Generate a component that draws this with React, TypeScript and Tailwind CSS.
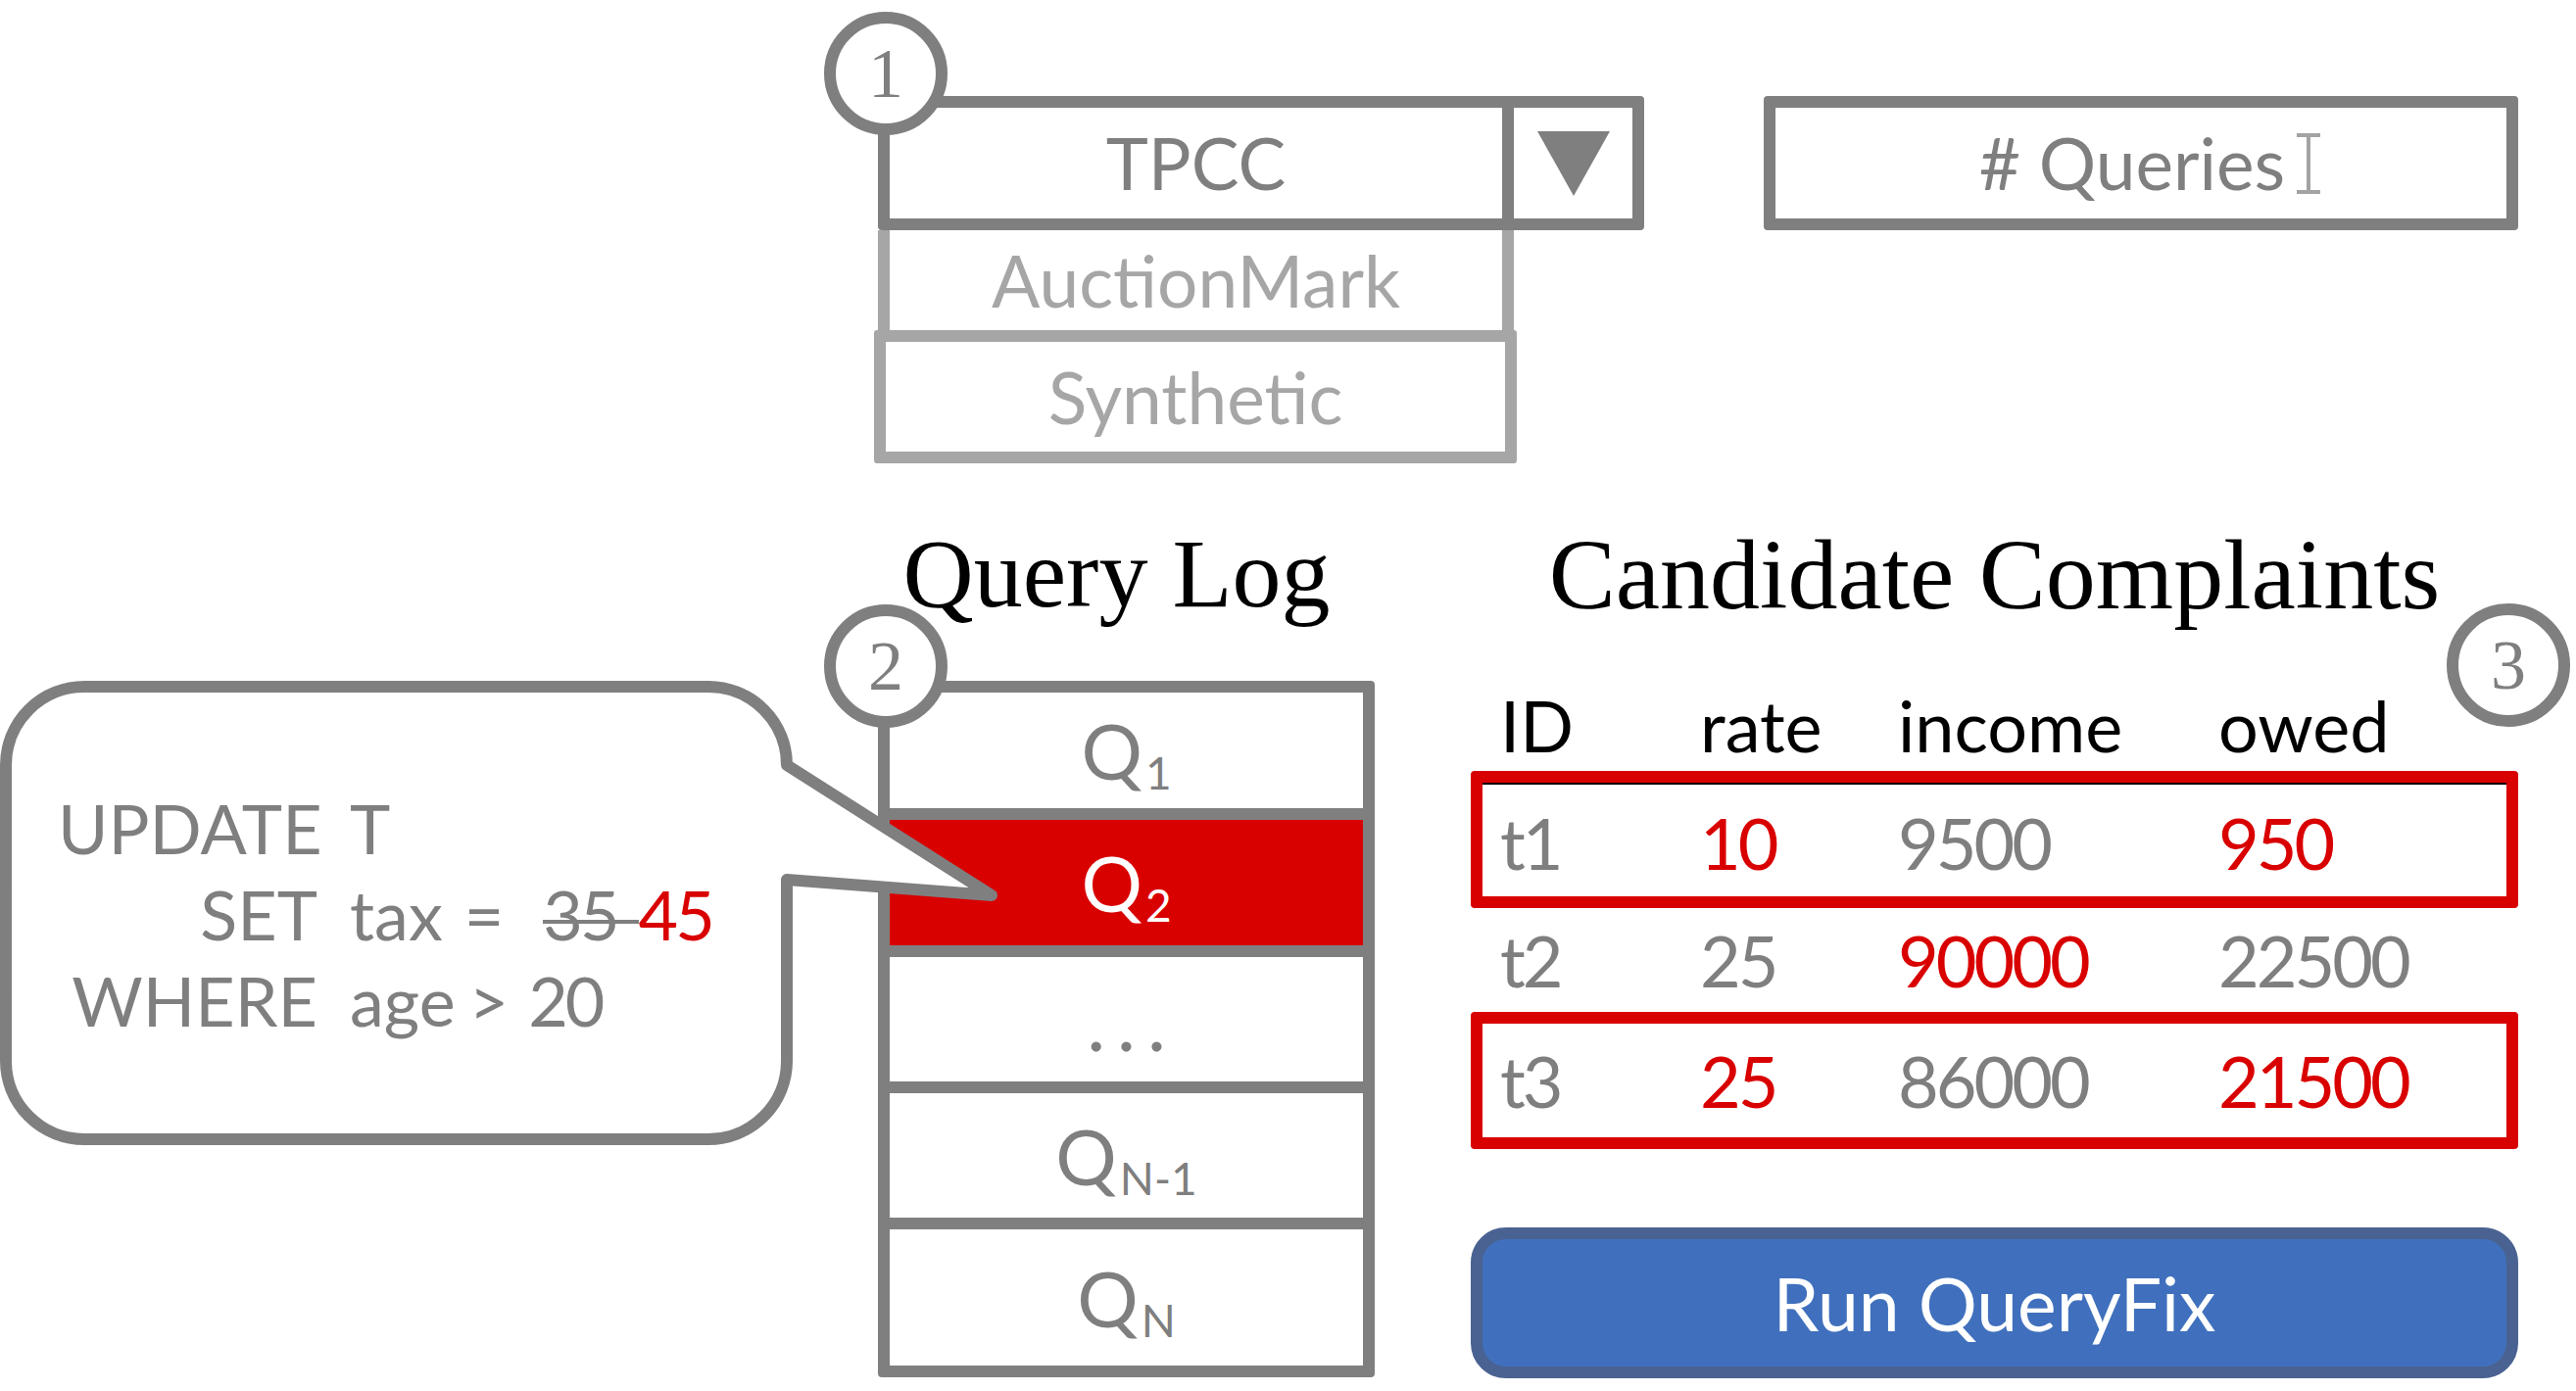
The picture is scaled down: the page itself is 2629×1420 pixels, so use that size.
import React from "react";

const GRAY = "#7f7f7f";

function Circle({ n, className }: { n: string; className: string }) {
  return (
    <div
      className={
        "absolute w-[126px] h-[126px] rounded-full border-[12px] border-[#7f7f7f] bg-white flex items-center justify-center font-['Liberation_Serif',serif] text-[72px] leading-none text-[#7f7f7f] z-20 " +
        className
      }
    >
      {n}
    </div>
  );
}

function QLabel({ sub, white }: { sub: string; white?: boolean }) {
  return (
    <div className={"flex items-baseline " + (white ? "text-white" : "text-[#7f7f7f]")}>
      <span className="text-[78px] leading-none">Q</span>
      <span className="text-[46px] leading-none relative top-[10px] ml-[3px]">{sub}</span>
    </div>
  );
}

const RED = "text-[#d90000] tracking-[-3px]";
const GR = "text-[#7f7f7f] tracking-[-3px]";

function Row({ cells }: { cells: [string, string][] }) {
  return (
    <div className="grid grid-cols-[204px_202px_327px_1fr] text-[72px] leading-none">
      {cells.map(([t, c], i) => (
        <span key={i} className={c}>
          {t}
        </span>
      ))}
    </div>
  );
}

export default function App() {
  return (
    <div className="relative w-[2629px] h-[1420px] bg-white overflow-hidden font-['Lato',sans-serif]">
      {/* Top row */}
      <div className="flex pt-[98px]">
        <div className="ml-[892px] w-[786px] flex flex-col relative">
          <div className="relative ml-[4px] flex h-[137px] w-[782px] border-[12px] border-[#7f7f7f] rounded-[4px] bg-white">
            <Circle n="1" className="left-[-67px] top-[-98px]" />
            <div className="w-[637px] border-r-[12px] border-[#7f7f7f] flex items-center justify-center text-[73px] leading-none text-[#7f7f7f]">
              TPCC
            </div>
            <div className="flex-1 flex items-center justify-center">
              <svg width="74" height="66" viewBox="0 0 74 66">
                <polygon points="0,0 74,0 37,66" fill={GRAY} />
              </svg>
            </div>
          </div>
          <div className="ml-[4px] w-[649px] h-[102px] border-x-[12px] border-[#a6a6a6] flex items-center justify-center text-[73px] leading-none text-[#a6a6a6]">
            AuctionMark
          </div>
          <div className="w-[656px] h-[136px] border-[12px] border-[#a6a6a6] rounded-[3px] flex items-center justify-center text-[73px] leading-none text-[#a6a6a6]">
            Synthetic
          </div>
        </div>
        <div className="ml-[122px] w-[770px] h-[137px] border-[12px] border-[#7f7f7f] rounded-[4px] flex items-center justify-center gap-[10px] pl-[20px]">
          <span className="text-[73px] leading-none text-[#7f7f7f]"># Queries</span>
          <svg width="28" height="64" viewBox="0 0 28 64">
            <path d="M2 3 H26 M14 3 V61 M2 61 H26" stroke="#a3a3a3" strokeWidth="4" fill="none" />
          </svg>
        </div>
      </div>

      {/* Bottom section */}
      <div className="flex mt-[63px]">
        {/* Bubble column */}
        <div className="w-[896px] pt-[159px] relative z-10">
          <div className="relative w-[809px] h-[474px]">
            <svg
              className="absolute left-0 top-0 overflow-visible"
              width="1030"
              height="480"
              viewBox="0 0 1030 480"
            >
              <path
                d="M 86 6 H 723 A 80 80 0 0 1 803 86 L 1012 219 L 803 203 V 388 A 80 80 0 0 1 723 468 H 86 A 80 80 0 0 1 6 388 V 86 A 80 80 0 0 1 86 6 Z"
                fill="white"
                stroke={GRAY}
                strokeWidth="12"
                strokeLinejoin="round"
              />
            </svg>
            <div className="relative pt-[106px] pl-[59px] grid grid-cols-[265px_1fr] gap-x-[33px] text-[70px] leading-[88px] text-[#7f7f7f]">
              <span className="text-right">UPDATE</span>
              <span>T</span>
              <span className="text-right">SET</span>
              <span className="flex">
                <span className="mr-[22px]">tax</span>
                <span className="mr-[40px]">=</span>
                <span className="relative pr-[22px] tracking-[-3px]">
                  35
                  <span className="absolute left-0 right-0 top-[50px] h-[4px] bg-[#7f7f7f]" />
                </span>
                <span className="text-[#d90000] tracking-[-3px]">45</span>
              </span>
              <span className="text-right">WHERE</span>
              <span className="flex">
                <span className="mr-[14px]">age</span>
                <span className="mr-[20px]">&gt;</span>
                <span className="tracking-[-3px]">20</span>
              </span>
            </div>
          </div>
        </div>

        {/* Query log column */}
        <div className="w-[507px] flex flex-col">
          <div className="h-[100px] pr-[20px] text-center font-['Liberation_Serif',serif] text-[100px] leading-none text-black">
            Query Log
          </div>
          <div className="relative mt-[59px] border-[12px] border-[#7f7f7f] rounded-[4px] flex flex-col divide-y-[12px] divide-[#7f7f7f]">
            <Circle n="2" className="left-[-67px] top-[-90px]" />
            <div className="h-[130px] flex items-center justify-center">
              <QLabel sub="1" />
            </div>
            <div className="h-[140px] flex items-center justify-center bg-[#d90000]">
              <QLabel sub="2" white />
            </div>
            <div className="h-[139px] flex items-end justify-center pb-[22px] text-[80px] leading-none text-[#7f7f7f] tracking-[12px] pl-[12px]">
              ...
            </div>
            <div className="h-[139px] flex items-center justify-center">
              <QLabel sub="N-1" />
            </div>
            <div className="h-[139px] flex items-center justify-center">
              <QLabel sub="N" />
            </div>
          </div>
        </div>

        {/* Table column */}
        <div className="ml-[98px] w-[1069px] flex flex-col relative">
          <Circle n="3" className="left-[996px] top-[80px]" />
          <div className="h-[100px] text-center font-['Liberation_Serif',serif] text-[102px] leading-none text-black">
            Candidate Complaints
          </div>
          <div className="mt-[68px] h-[72px] pl-[30px]">
            <Row cells={[["ID", "text-black"], ["rate", "text-black"], ["income", "text-black"], ["owed", "text-black"]]} />
          </div>
          <div className="mt-[11px] h-[140px] border-[12px] border-[#d90000] rounded-[4px] flex flex-col">
            <div className="h-[2px] bg-black" />
            <div className="flex-1 flex items-center pl-[18px] pt-[4px]">
              <div className="w-full">
                <Row cells={[["t1", GR], ["10", RED], ["9500", GR], ["950", RED]]} />
              </div>
            </div>
          </div>
          <div className="h-[106px] flex items-center pl-[30px]">
            <div className="w-full">
              <Row cells={[["t2", GR], ["25", GR], ["90000", RED], ["22500", GR]]} />
            </div>
          </div>
          <div className="h-[140px] border-[12px] border-[#d90000] rounded-[4px] flex items-center pl-[18px]">
            <div className="w-full">
              <Row cells={[["t3", GR], ["25", RED], ["86000", GR], ["21500", RED]]} />
            </div>
          </div>
          <div className="mt-[80px] h-[154px] rounded-[36px] border-[12px] border-[#4a6291] bg-[#4070bd] flex items-center justify-center text-white text-[75px] leading-none">
            Run QueryFix
          </div>
        </div>
      </div>
    </div>
  );
}
